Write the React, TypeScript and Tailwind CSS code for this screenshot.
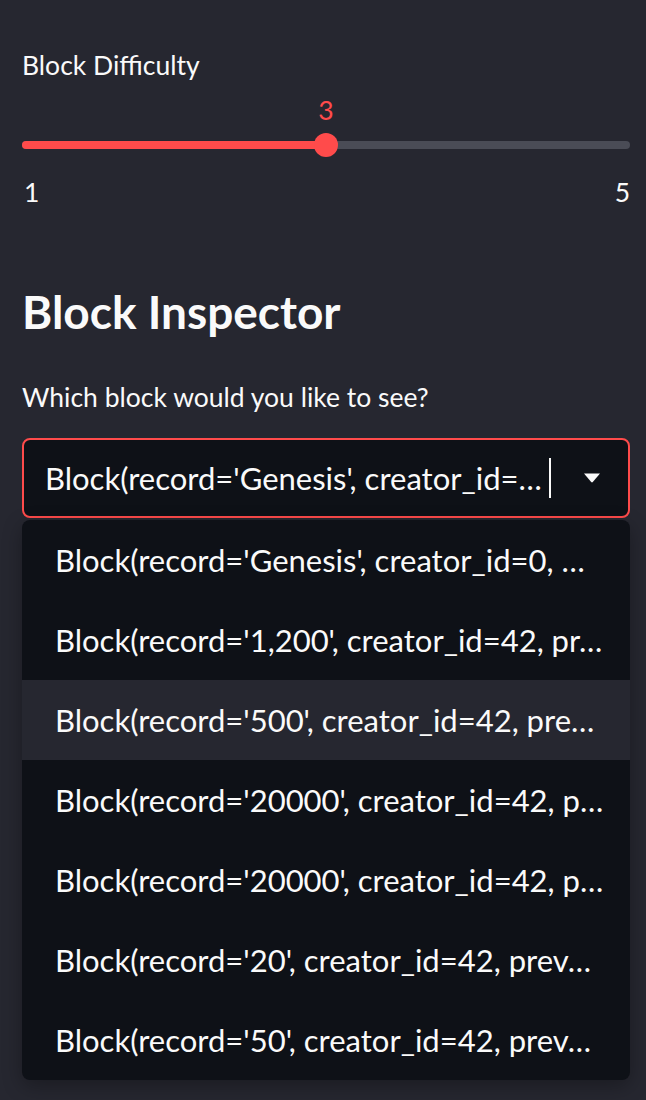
import React from 'react';

const options = [
  "Block(record='Genesis', creator_id=0, …",
  "Block(record='1,200', creator_id=42, pr…",
  "Block(record='500', creator_id=42, pre…",
  "Block(record='20000', creator_id=42, p…",
  "Block(record='20000', creator_id=42, p…",
  "Block(record='20', creator_id=42, prev…",
  "Block(record='50', creator_id=42, prev…",
];

function Slider() {
  return (
    <div className="mt-[11px] flex flex-col">
      <div className="relative h-[34px]">
        <span className="absolute left-1/2 -translate-x-1/2 text-[26.5px] leading-[34px] text-[#ff4b4b]">3</span>
      </div>
      <div className="relative mt-[6px] flex h-[24px] items-center">
        <div className="h-[8px] w-full rounded-full bg-[#4a4c56]" />
        <div className="absolute left-0 h-[8px] w-1/2 rounded-full bg-[#ff4b4b]" />
        <div className="absolute left-1/2 h-[24px] w-[24px] -translate-x-1/2 rounded-full bg-[#ff4b4b]" />
      </div>
      <div className="mt-[18px] flex justify-between text-[26.5px] leading-[34px]">
        <span className="pl-[2px]">1</span>
        <span>5</span>
      </div>
    </div>
  );
}

export default function App() {
  return (
    <div
      className="h-[1100px] w-full overflow-hidden bg-[#262730] pl-[22px] pr-[16px] text-[#fafafa]"
      style={{ fontFamily: 'Lato, "Noto Sans", sans-serif' }}
    >
      <div className="pt-[48px] text-[26.5px] leading-[34px]">Block Difficulty</div>
      <Slider />

      <h2 className="mt-[75px] text-[46px] font-bold leading-[56px]">Block Inspector</h2>

      <div className="mt-[40px] text-[26.5px] leading-[34px]">Which block would you like to see?</div>

      <div className="mt-[24px] flex flex-col gap-[2px]">
        <div className="flex h-[80px] items-center rounded-[8px] border-2 border-[#ff4b4b] bg-[#0e1117] pl-[21px] pr-[27px]">
          <span className="whitespace-nowrap text-[31px]">Block(record='Genesis', creator_id=…</span>
          <span className="ml-[7px] h-[40px] w-[2px] bg-[#fafafa]" />
          <svg className="ml-auto" width="18" height="10" viewBox="0 0 18 10">
            <path d="M1 0.5 H17 L9.8 9 Q9 9.8 8.2 9 Z" fill="#fafafa" />
          </svg>
        </div>

        <div className="overflow-hidden rounded-[8px] bg-[#0e1117] shadow-[0_6px_20px_rgba(0,0,0,0.3)]">
          {options.map((o, i) => (
            <div
              key={i}
              className={`flex h-[80px] items-center whitespace-nowrap pl-[33px] text-[31px] ${i === 2 ? 'bg-[#262730]' : ''}`}
            >
              {o}
            </div>
          ))}
        </div>
      </div>
    </div>
  );
}
